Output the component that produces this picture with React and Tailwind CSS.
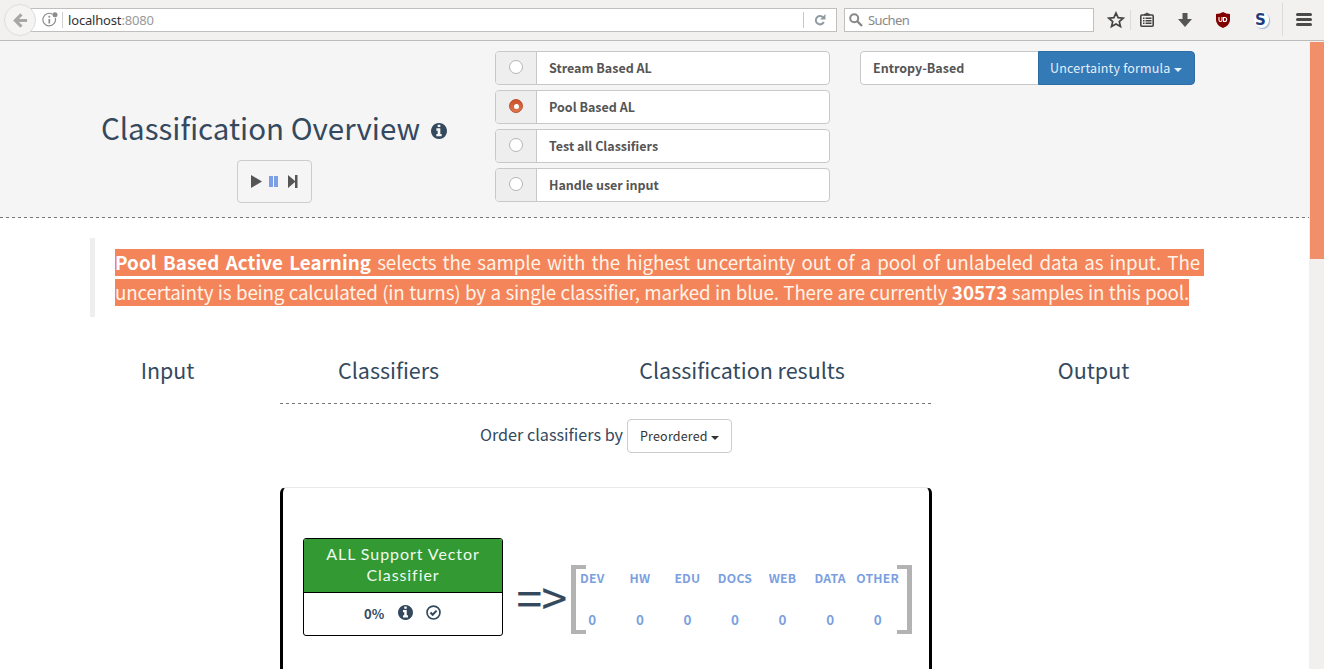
import React from "react";

const HAN = "font-['Noto_Sans_CJK_JP',sans-serif]";

function Caret() {
  return <span className="mt-[3px] ml-[3px] inline-block border-x-4 border-t-4 border-x-transparent border-t-current" />;
}

function DashedRule() {
  return <div className="h-px w-full bg-[repeating-linear-gradient(to_right,#777_0_3px,transparent_3px_6px)]" />;
}

function InfoIcon({ className }) {
  return (
    <svg viewBox="0 0 1536 1536" className={className} fill="currentColor">
      <path d="M1024 1248v-160q0-14-9-23t-23-9h-96V544q0-14-9-23t-23-9H544q-14 0-23 9t-9 23v160q0 14 9 23t23 9h96v320h-96q-14 0-23 9t-9 23v160q0 14 9 23t23 9h448q14 0 23-9t9-23zM896 352V192q0-14-9-23t-23-9H672q-14 0-23 9t-9 23v160q0 14 9 23t23 9h192q14 0 23-9t9-23zm640 416q0 209-103 385.500T1153.500 1433 768 1536t-385.500-103T103 1153.500 0 768t103-385.500T382.500 103 768 0t385.500 103T1433 382.500 1536 768z" />
    </svg>
  );
}

function Toolbar() {
  return (
    <div className="flex h-[41px] w-full items-start border-b border-[#bdbcbb] bg-[#f2f1f0] font-['Noto_Sans',sans-serif] text-[13px] text-[#333]">
      <div className="relative z-10 mt-[4px] ml-[4px] flex size-[32px] shrink-0 items-center justify-center rounded-full border border-[#dddcdb] bg-[#f5f4f3]">
        <svg viewBox="0 0 16 16" className="size-[15px]" fill="none" stroke="#a8a7a6" strokeWidth="3.300">
          <path d="M15 8H3.500M9 1.500L2.500 8L9 14.500" />
        </svg>
      </div>
      <div className="-ml-[6px] mt-[8px] flex h-[24px] w-[807px] shrink-0 items-center border border-[#c0bfbe] bg-white pl-[11px]">
        <svg viewBox="0 0 16 16" className="size-[16px]" fill="none" stroke="#8d8d8d">
          <path d="M10.500 2.200A6.300 6.300 0 1 0 13.300 6" strokeWidth="1.200" />
          <path d="M7.300 7v4.500" strokeWidth="1.700" />
          <circle cx="7.300" cy="4.800" r="1" fill="#8d8d8d" stroke="none" />
          <circle cx="13" cy="2.800" r="2.500" fill="#8d8d8d" stroke="none" />
        </svg>
        <span className="ml-[4px] h-[16px] w-px bg-[#cfcfcf]" />
        <span className="ml-[5px] pt-[2px] tracking-[-0.17px]">localhost<span className="text-[#999]">:8080</span></span>
        <span className="ml-auto h-[16px] w-px bg-[#c8c8c8]" />
        <svg viewBox="0 0 12 12" className="mr-[10px] ml-[10px] size-[12px]" fill="none" stroke="#909ba1" strokeWidth="2">
          <path d="M9 3.200A4.200 4.200 0 1 0 9.800 8" />
          <path d="M11.500 0v5.500H6z" fill="#909ba1" stroke="none" />
        </svg>
      </div>
      <div className="mt-[8px] ml-[7px] flex h-[24px] w-[250px] shrink-0 items-center border border-[#c0bfbe] bg-white pl-[4px]">
        <svg viewBox="0 0 14 14" className="size-[14px]" fill="none" stroke="#888">
          <circle cx="5.200" cy="5.200" r="4" strokeWidth="2" />
          <path d="M8 8l5 5" strokeWidth="2.400" />
        </svg>
        <span className="ml-[5px] pt-[2px] tracking-[-0.6px] text-[#888]">Suchen</span>
      </div>
      <svg viewBox="0 0 18 18" className="mt-[11px] ml-[13px] size-[18px] shrink-0" fill="none" stroke="#444" strokeWidth="1.700">
        <path d="M9 2l2.100 4.700 5.100.500-3.900 3.400 1.200 5L9 13l-4.500 2.600 1.200-5L1.800 7.200l5.100-.500z" />
      </svg>
      <span className="mt-[10px] ml-[5px] h-[20px] w-px bg-[#dcdbda]" />
      <svg viewBox="0 0 14 16" className="mt-[12px] ml-[9px] h-[16px] w-[14px] shrink-0" fill="none" stroke="#444" strokeWidth="1.600">
        <rect x=".8" y="3" width="12.400" height="11.200" rx="1" />
        <path d="M3 6.200h1.500M5.500 6.200H11.500M3 8.700h1.500M5.500 8.700H11.500M3 11.200h1.500M5.500 11.200H11.500" strokeWidth="1.400" />
        <path d="M4.500 3V2h1.300L7 .8 8.200 2h1.300v1z" fill="#444" strokeWidth="1" />
      </svg>
      <svg viewBox="0 0 14 14" className="mt-[13px] ml-[24px] size-[14px] shrink-0" fill="#555">
        <path d="M4.500 0h5v6H14l-7 8L0 6h4.500z" />
      </svg>
      <svg viewBox="0 0 14 16" className="mt-[12px] ml-[24px] h-[16px] w-[14px] shrink-0">
        <path d="M7 0q3 2 7 2v6q0 5-7 8-7-3-7-8V2q4 0 7-2z" fill="#800000" />
        <path d="M3 5v3q0 1.500 1.500 1.500T6 8V5M7.500 5.500v4h1.200q2 0 2-2t-2-2z" fill="none" stroke="#fff" strokeWidth="1.100" />
      </svg>
      <div className="mt-[12px] ml-[24px] flex h-[16px] w-[15px] shrink-0 items-center justify-center rounded-full bg-white pr-[2px] font-['DejaVu_Sans',sans-serif] text-[15px] leading-none font-bold text-[#1d3d7c] shadow-[1px_1px_1px_#9fb3d0]">S</div>
      <span className="mt-[3px] ml-[13px] h-[33px] w-px bg-[#dcdbda]" />
      <div className="mt-[13px] ml-[13px] flex flex-col gap-[2px]">
        <span className="h-[3px] w-[16px] rounded-sm bg-[#4a4a4a]" />
        <span className="h-[3px] w-[16px] rounded-sm bg-[#4a4a4a]" />
        <span className="h-[3px] w-[16px] rounded-sm bg-[#4a4a4a]" />
      </div>
    </div>
  );
}

function Option({ label, checked }) {
  return (
    <label className="flex h-[34px] w-[335px] overflow-hidden rounded-[4px] border border-[#c8c8c8] bg-white">
      <span className="flex w-[41px] items-start justify-center border-r border-[#c8c8c8] bg-[#eeeeee] pt-[8px]">
        {checked ? (
          <span className="flex size-[14px] items-center justify-center rounded-full border border-[#b8502c] bg-linear-to-b from-[#c9512a] to-[#e0764f]">
            <span className="size-[5px] rounded-full bg-white" />
          </span>
        ) : (
          <span className="size-[14px] rounded-full border border-[#b5b5b5] bg-white" />
        )}
      </span>
      <span className="pl-[12px] text-[12.5px] leading-[32px] font-bold text-[#555]">{label}</span>
    </label>
  );
}

function Header() {
  return (
    <header className="bg-[#f5f5f5]">
      <div className="flex h-[176px] items-start">
        <div className="ml-[90px] flex w-[368px] flex-col items-center pt-[63px]">
          <h1 className="flex h-[46px] items-center text-[29.5px] leading-[46px] whitespace-nowrap text-[#34495e]">
            Classification Overview
            <InfoIcon className="mt-[8px] ml-[11px] size-[16px]" />
          </h1>
          <div className="mt-[10px] flex h-[43px] w-[75px] items-center rounded-[4px] border border-[#ccc] bg-[#f5f5f5] pl-[13px] text-[#555]">
            <svg viewBox="0 0 11 13" className="h-[13px] w-[11px]" fill="currentColor"><path d="M0 0l11 6.500L0 13z" /></svg>
            <svg viewBox="0 0 9 11" className="ml-[7px] h-[11px] w-[9px]" fill="#7c9fe6"><path d="M0 0h4v11H0zM5 0h4v11H5z" /></svg>
            <svg viewBox="0 0 10 13" className="ml-[10px] h-[13px] w-[10px]" fill="currentColor"><path d="M0 0l7 6V0h2.500v13H7V7l-7 6z" /></svg>
          </div>
        </div>
        <div className="ml-[37px] flex flex-col gap-[5px] pt-[10px]">
          <Option label="Stream Based AL" />
          <Option label="Pool Based AL" checked />
          <Option label="Test all Classifiers" />
          <Option label="Handle user input" />
        </div>
        <div className="mt-[10px] ml-[30px] flex h-[34px] w-[335px] overflow-hidden rounded-[4px]">
          <span className="w-[178px] rounded-l-[4px] border border-r-0 border-[#c8c8c8] bg-white pl-[12px] text-[12.5px] leading-[32px] font-bold text-[#555]">Entropy-Based</span>
          <button className="flex w-[157px] items-center rounded-r-[4px] border border-[#2e6da4] bg-[#337ab7] pl-[11px] text-[12.5px] whitespace-nowrap text-[#e6effa]">
            <span className="tracking-[0.18px]">Uncertainty formula</span>
            <Caret />
          </button>
        </div>
      </div>
      <DashedRule />
    </header>
  );
}

const LABELS = ["DEV", "HW", "EDU", "DOCS", "WEB", "DATA", "OTHER"];

function Vector() {
  return (
    <div className="relative h-[69px] w-[341px]">
      <span className="absolute top-0 left-0 h-[69px] w-[15px] border-y-4 border-l-[5px] border-[#b3b3b3]" />
      <span className="absolute top-0 right-0 h-[69px] w-[15px] border-y-4 border-r-[5px] border-[#b3b3b3]" />
      <div className="-ml-[2.5px] grid w-[333px] grid-cols-7 text-center font-bold text-[#7c9fe0]">
        {LABELS.map((l) => (
          <span key={l} className="relative h-[40px] text-[12.2px] leading-[27px] tracking-[0.25px]">{l}</span>
        ))}
        {LABELS.map((l) => (
          <span key={l} className="relative text-[13.4px] leading-[29px]">0</span>
        ))}
      </div>
    </div>
  );
}

function ClassifierCard() {
  return (
    <div className="flex h-[98px] w-[200px] flex-col overflow-hidden rounded-[3px] border border-black bg-white">
      <div className="h-[54px] border-b border-black bg-[#339933] pt-[4px] text-center font-['Lato',sans-serif] text-[16px] leading-[21px] tracking-[0.93px] text-[#f0faf0]">
        ALL Support Vector<br />Classifier
      </div>
      <div className="flex flex-1 items-center pl-[60px] text-[#34495e]">
        <span className="-mt-px text-[13px] leading-none font-bold">0%</span>
        <InfoIcon className="mb-[3px] ml-[14px] size-[15px]" />
        <svg viewBox="0 0 16 16" className="mb-[3px] ml-[13px] size-[15px]" fill="none" stroke="currentColor" strokeWidth="1.800">
          <circle cx="8" cy="8" r="6.900" />
          <path d="M4.800 8l2.300 2.400L11.300 6" strokeWidth="2.200" />
        </svg>
      </div>
    </div>
  );
}

export default function App() {
  return (
    <div className={`h-[669px] w-[1324px] overflow-hidden bg-white ${HAN}`}>
      <Toolbar />
      <div className="flex h-[628px]">
        <main className="w-[1309px] shrink-0 overflow-hidden">
          <Header />
          <blockquote className="mt-[20px] ml-[90px] h-[79px] border-l-[5px] border-[#eeeeee] pt-[11px] pl-[20px] text-[18.8px] text-[#fff3e8]">
            <p className="mb-[3px] h-[27px] w-[1089px] bg-[#f4845a] pr-[4px] leading-[26px] tracking-[-0.1px] whitespace-nowrap [text-align-last:justify]">
              <b className="tracking-[0.04px] text-white">Pool Based Active Learning</b> selects the sample with the highest uncertainty out of a pool of unlabeled data as input. The
            </p>
            <p className="h-[27px] w-[1074px] bg-[#f4845a] leading-[26px] tracking-[-0.19px] whitespace-nowrap [text-align-last:justify]">
              uncertainty is being calculated (in turns) by a single classifier, marked in blue. There are currently <b className="tracking-normal text-white">30573</b> samples in this pool.
            </p>
          </blockquote>
          <div className="flex pl-[90px] text-center text-[#34495e]">
            <h3 className="w-[155px] pt-[36px] text-[21.4px] leading-[34px]">Input</h3>
            <section className="ml-[35px] w-[652px]">
              <div className="flex h-[86px] pt-[36px] text-[21.5px] leading-[34px]">
                <h3 className="w-[217px]">Classifiers</h3>
                <h3 className="w-[435px] pl-[55px]">Classification results</h3>
              </div>
              <DashedRule />
              <div className="mt-[15px] flex h-[34px] items-center justify-center">
                <span className="-mt-[4px] text-[16.2px] leading-[30px]">Order classifiers by</span>
                <button className="ml-[4px] flex h-[34px] w-[105px] items-center rounded-[4px] border border-[#ccc] bg-white pl-[12px] text-[12.5px] text-[#333]">
                  <span className="tracking-[0.18px]">Preordered</span>
                  <Caret />
                </button>
              </div>
              <div className="mt-[34px] flex h-[240px] items-start rounded-[6px] border-x-[3px] border-t border-x-black border-t-[#e8e8e8]">
                <div className="mt-[50px] ml-[20px]"><ClassifierCard /></div>
                <span className="mt-[75px] ml-[9px] w-[59px] text-[46px] leading-[66px] tracking-[-0.5px] whitespace-nowrap [-webkit-text-stroke:0.2px_#34495e]">=&gt;</span>
                <div className="mt-[77px]"><Vector /></div>
              </div>
            </section>
            <h3 className="ml-[84px] w-[155px] pt-[36px] text-[21.5px] leading-[34px]">Output</h3>
          </div>
        </main>
        <aside className="w-[15px] shrink-0 bg-[#f1f0ef] pt-px pl-px">
          <div className="h-[217px] bg-[#f08f69]" />
        </aside>
      </div>
    </div>
  );
}
